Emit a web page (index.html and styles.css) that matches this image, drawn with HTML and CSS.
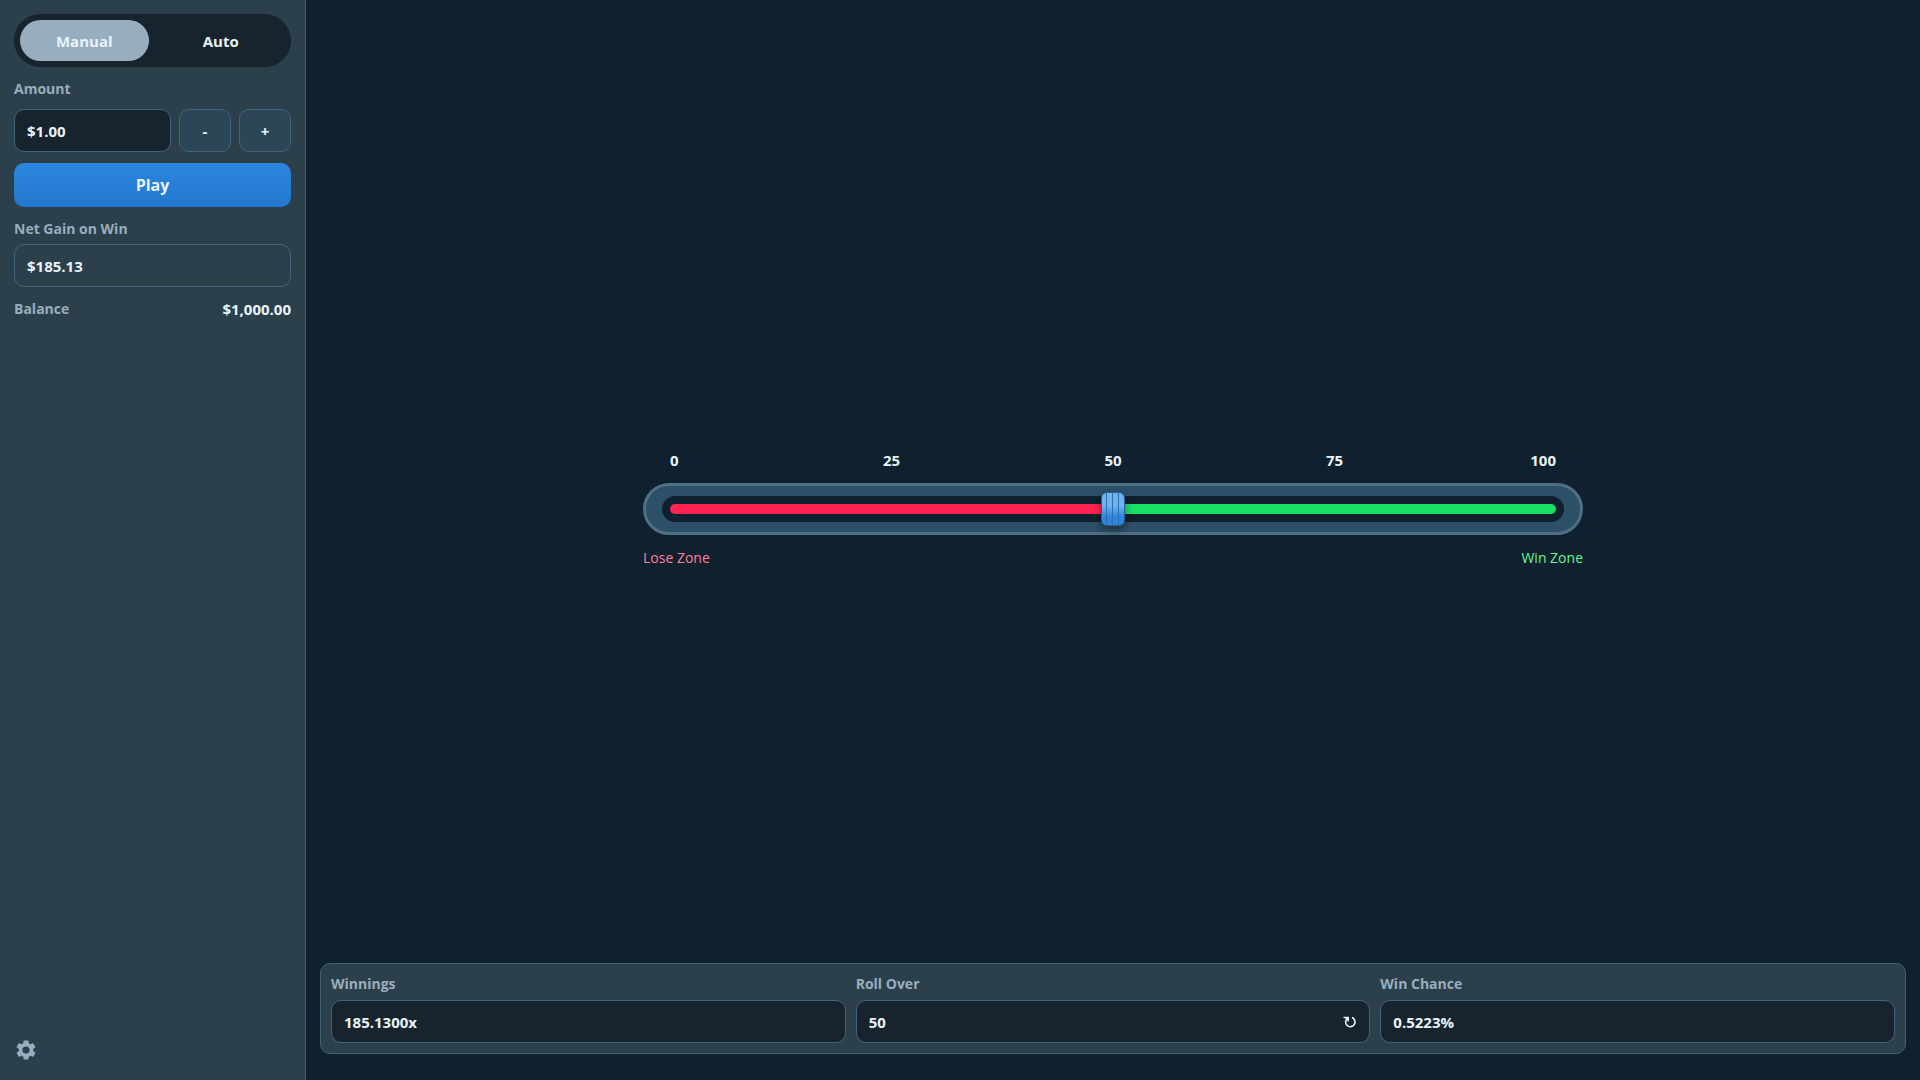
FILE: index.html
```html
<!DOCTYPE html>
<html lang="en">
<head>
    <meta charset="utf-8">
    <title>Dice</title>
    <meta name="viewport" content="width=device-width, initial-scale=1">
    <link rel="stylesheet" href="styles.css">
</head>
<body>

<div class="game">
    <aside class="sidebar">
        <div class="mode-toggle">
            <button type="button" class="mode-button active">Manual</button>
            <button type="button" class="mode-button">Auto</button>
        </div>

        <label class="label amount-label" for="amount">Amount</label>
        <div class="amount-row">
            <input type="text" class="field" id="amount" value="$1.00">
            <button type="button" class="step-button" aria-label="Decrease amount">-</button>
            <button type="button" class="step-button" aria-label="Increase amount">+</button>
        </div>

        <button type="button" class="play-button">Play</button>

        <label class="label" for="net-gain">Net Gain on Win</label>
        <input type="text" class="field field-plain" id="net-gain" value="$185.13" readonly>

        <div class="balance">
            <span class="label">Balance</span>
            <span class="balance-value">$1,000.00</span>
        </div>

        <button type="button" class="settings-button" aria-label="Settings">
            <svg viewBox="0 0 24 24" width="24" height="24" aria-hidden="true">
                <path fill="currentColor" d="M19.14 12.94c.04-.3.06-.61.06-.94s-.02-.64-.07-.94l2.03-1.58a.49.49 0 0 0 .12-.61l-1.92-3.32a.49.49 0 0 0-.59-.22l-2.39.96a7 7 0 0 0-1.62-.94l-.36-2.54a.48.48 0 0 0-.48-.41h-3.84a.48.48 0 0 0-.47.41l-.36 2.54a7 7 0 0 0-1.62.94l-2.39-.96a.48.48 0 0 0-.59.22L2.74 8.87a.48.48 0 0 0 .12.61l2.03 1.58a6 6 0 0 0 0 1.88l-2.03 1.58a.49.49 0 0 0-.12.61l1.92 3.32c.12.22.37.29.59.22l2.39-.96c.5.38 1.03.7 1.62.94l.36 2.54c.05.24.24.41.48.41h3.84c.24 0 .44-.17.47-.41l.36-2.54a7 7 0 0 0 1.62-.94l2.39.96c.22.08.47 0 .59-.22l1.92-3.32a.48.48 0 0 0-.12-.61zM12 15.6a3.6 3.6 0 1 1 0-7.2 3.6 3.6 0 0 1 0 7.2z"/>
            </svg>
        </button>
    </aside>

    <main class="main">
        <section class="stage">
            <div class="dice">
                <div class="scale">
                    <span>0</span>
                    <span>25</span>
                    <span>50</span>
                    <span>75</span>
                    <span>100</span>
                </div>
                <div class="slider-shell">
                    <div class="slider-groove">
                        <input type="range" class="slider" min="0" max="100" value="50" aria-label="Roll over">
                    </div>
                </div>
                <div class="zones">
                    <span class="zone-lose">Lose Zone</span>
                    <span class="zone-win">Win Zone</span>
                </div>
            </div>
        </section>

        <section class="stats">
            <div class="stat">
                <label class="label stat-label" for="winnings">Winnings</label>
                <input type="text" class="field" id="winnings" value="185.1300x">
            </div>
            <div class="stat">
                <label class="label stat-label" for="roll-over">Roll Over</label>
                <div class="field roll-field">
                    <input type="text" class="roll-input" id="roll-over" value="50">
                    <button type="button" class="swap-button" aria-label="Switch roll direction">
                        <svg viewBox="0 0 14 12" width="14" height="12" aria-hidden="true">
                            <path fill="none" stroke="currentColor" stroke-width="1.6" d="M.5 1.5H5.2V5.5M4.8 2A4.7 4.7 0 1 0 9 1.6"/>
                        </svg>
                    </button>
                </div>
            </div>
            <div class="stat">
                <label class="label stat-label" for="win-chance">Win Chance</label>
                <input type="text" class="field" id="win-chance" value="0.5223%">
            </div>
        </section>
    </main>
</div>

</body>
</html>
```
FILE: styles.css
```css
* {
    box-sizing: border-box;
}

body {
    margin: 0;
    background: #0f212e;
    color: #e8f3fa;
    font: 700 15px/20px "Segoe UI", "Open Sans", sans-serif;
}

button,
input {
    margin: 0;
    color: inherit;
    font: inherit;
}

button {
    border: 0;
    padding: 0;
    cursor: pointer;
}

.game {
    display: grid;
    grid-template-columns: 306px 1fr;
    min-height: 100vh;
}

/* sidebar */
.sidebar {
    display: flex;
    flex-direction: column;
    padding: 14px;
    border-right: 1px solid #42606f;
    background: #2c404b;
}

.mode-toggle {
    display: grid;
    grid-template-columns: 1fr 1fr;
    gap: 8px;
    padding: 6px;
    border-radius: 27px;
    background: #17242d;
}

.mode-button {
    height: 41px;
    border-radius: 21px;
    background: transparent;
}

.mode-button.active {
    background: #98aebe;
}

.label {
    color: #98aebe;
    font-size: 14px;
    line-height: 20px;
}

.amount-label {
    margin: 12px 0 10px;
}

.amount-row {
    display: grid;
    grid-template-columns: 1fr 52px 52px;
    gap: 8px;
}

.field {
    width: 100%;
    min-width: 0;
    height: 43px;
    padding: 0 12px;
    border: 1px solid #42647c;
    border-radius: 10px;
    outline: none;
    background: #17242d;
}

.field-plain {
    margin-top: 5px;
    background: transparent;
}

.step-button {
    border: 1px solid #42647c;
    border-radius: 10px;
    background: #2c4657;
}

.play-button {
    height: 44px;
    margin: 11px 0 12px;
    border-radius: 10px;
    background: linear-gradient(#2b85e0, #2477cd);
    font-size: 16px;
}

.balance {
    display: flex;
    align-items: center;
    justify-content: space-between;
    margin-top: 12px;
}

.settings-button {
    display: flex;
    align-self: flex-start;
    margin-top: auto;
    margin-bottom: 4px;
    background: transparent;
    color: #98aebe;
}

/* playing area */
.main {
    display: flex;
    flex-direction: column;
    min-width: 0;
    padding: 14px 14px 26px;
}

.stage {
    display: flex;
    flex: 1;
    align-items: center;
    justify-content: center;
    padding-top: 40px;
}

.dice {
    width: 100%;
    max-width: 940px;
}

/* outer cells are half as wide, so the middle numbers sit on the quarters */
.scale {
    display: grid;
    grid-template-columns: 1fr 2fr 2fr 2fr 1fr;
    padding: 0 27px;
    margin-bottom: 13px;
    text-align: center;
}

.scale span:first-child {
    text-align: left;
}

.scale span:last-child {
    text-align: right;
}

.slider-shell {
    padding: 10px 16px;
    border: 3px solid #4f6f83;
    border-radius: 26px;
    background: #2d5069;
}

.slider-groove {
    padding: 0 8px;
    border-radius: 13px;
    background: #0f212e;
}

.slider {
    display: block;
    width: 100%;
    height: 26px;
    background: transparent;
    outline: none;
    -webkit-appearance: none;
    appearance: none;
    cursor: pointer;
}

.slider::-webkit-slider-runnable-track {
    height: 10px;
    border-radius: 5px;
    background: linear-gradient(90deg, #ff244f 50%, #1adf65 50%);
}

.slider::-webkit-slider-thumb {
    width: 24px;
    height: 34px;
    margin-top: -12px;
    border: 1px solid #2a5f92;
    border-radius: 6px;
    background:
        repeating-linear-gradient(90deg, transparent 0 4px, #2f6fae 4px 5px, transparent 5px 6px),
        linear-gradient(#6db4ee 40%, #2b85e0 75%);
    box-shadow: 0 4px 8px rgba(0, 0, 0, 0.4);
    -webkit-appearance: none;
    appearance: none;
}

.zones {
    display: flex;
    justify-content: space-between;
    margin-top: 13px;
    font-size: 14px;
    font-weight: 400;
}

.zone-lose {
    color: #ff7f9f;
}

.zone-win {
    color: #66f595;
}

/* bottom panel */
.stats {
    display: grid;
    grid-template-columns: repeat(3, 1fr);
    gap: 10px;
    padding: 10px;
    border: 1px solid #42606f;
    border-radius: 10px;
    background: #2c404b;
}

.stat-label {
    display: block;
    margin-bottom: 6px;
}

.roll-field {
    display: flex;
    align-items: center;
}

.roll-input {
    flex: 1;
    min-width: 0;
    padding: 0;
    border: 0;
    outline: none;
    background: transparent;
}

.swap-button {
    display: flex;
    background: transparent;
}
```
